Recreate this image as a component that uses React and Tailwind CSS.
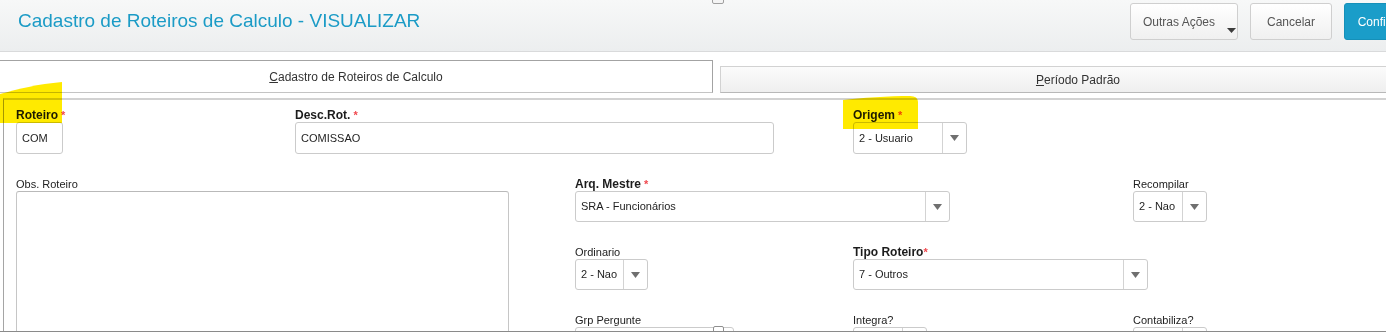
import React from "react";

function Arrow() {
  return (
    <svg width="9" height="6" viewBox="0 0 9 6">
      <path d="M0 0H9L4.5 6Z" fill="#6f6f6f" />
    </svg>
  );
}

function Label({ text, bold, req, noSpace }) {
  return (
    <div
      className={
        bold
          ? "h-[14px] leading-[14px] text-[12px] font-bold text-[#1c1c1c] whitespace-nowrap"
          : "h-[14px] leading-[14px] text-[11px] text-[#222] whitespace-nowrap"
      }
    >
      {text}
      {req && (
        <span className="text-[11px] font-bold text-[#f0484e]">{noSpace ? "*" : " *"}</span>
      )}
    </div>
  );
}

function Field({ label, bold, req, noSpace, className, children }) {
  return (
    <div className={"flex flex-col " + (className || "")}>
      <Label text={label} bold={bold} req={req} noSpace={noSpace} />
      {children}
    </div>
  );
}

function Input({ value, className }) {
  return (
    <div
      className={
        "flex items-center pl-[5px] border border-[#cbcbcb] rounded-[3px] bg-white text-[11px] text-[#1e1e1e] whitespace-nowrap " +
        className
      }
    >
      {value}
    </div>
  );
}

function Select({ value, className }) {
  return (
    <div className={"flex border border-[#cbcbcb] rounded-[3px] bg-white " + className}>
      <div className="flex-1 flex items-center pl-[5px] text-[11px] text-[#1e1e1e] whitespace-nowrap overflow-hidden">
        {value}
      </div>
      <div className="w-[24px] border-l border-[#d3d3d3] flex items-center justify-center">
        <Arrow />
      </div>
    </div>
  );
}

export default function App() {
  return (
    <div className="relative w-[1386px] h-[334px] overflow-hidden bg-white font-['Liberation_Sans',Arial,sans-serif]">
      <div className="w-[1436px]">
        {/* Header */}
        <div className="h-[52px] border-b border-[#d9dadb] bg-gradient-to-b from-[#f7f8f8] to-[#eceeef] flex items-start justify-between">
          <h1 className="pl-[18px] pt-[9px] text-[19px] leading-[24px] text-[#1b9bc6] font-normal whitespace-nowrap">
            Cadastro de Roteiros de Calculo - VISUALIZAR
          </h1>
          <div className="flex gap-[12px] pt-[3px] pr-[12px]">
            <button className="relative h-[37px] w-[108px] rounded-[3px] border border-[#cfcfcf] bg-gradient-to-b from-white to-[#f0f0f0] text-[12px] text-[#555] text-left pl-[12px]">
              Outras Ações
              <svg className="absolute right-[1px] bottom-[6px]" width="9" height="5" viewBox="0 0 9 5">
                <path d="M0 0H9L4.5 5Z" fill="#3c3c3c" />
              </svg>
            </button>
            <button className="h-[37px] w-[82px] rounded-[3px] border border-[#cfcfcf] bg-gradient-to-b from-white to-[#f0f0f0] text-[12px] text-[#555]">
              Cancelar
            </button>
            <button className="h-[37px] w-[80px] rounded-[3px] border border-[#1590b9] bg-[#1a9dc9] text-[12px] text-white">
              Confirmar
            </button>
          </div>
        </div>

        {/* Tabs */}
        <div className="mt-[8px] flex items-start">
          <div className="w-[713px] h-[33px] border-t border-r border-b border-t-[#a3a3a3] border-r-[#a3a3a3] border-b-[#c4c4c4] bg-white flex items-center justify-center text-[12px] text-[#333]">
            <span>
              <span className="underline">C</span>adastro de Roteiros de Calculo
            </span>
          </div>
          <div className="ml-[7px] mt-[6px] w-[716px] h-[27px] border border-[#d2d2d2] border-b-[#b8b8b8] bg-gradient-to-b from-[#fbfbfb] to-[#efefef] flex items-center justify-center text-[12px] text-[#333]">
            <span>
              <span className="underline">P</span>eríodo Padrão
            </span>
          </div>
        </div>

        {/* Panel */}
        <div className="mt-[5px] ml-[3px] h-[233px] border-t-2 border-l border-t-[#d2d2d2] border-l-[#a5a5a5] overflow-hidden pl-[12px] pt-[8px]">
          <div className="flex">
            <Field className="w-[279px]" label="Roteiro" bold req>
              <Input value="COM" className="w-[47px] h-[32px]" />
            </Field>
            <Field className="w-[558px]" label="Desc.Rot." bold req>
              <Input value="COMISSAO" className="w-[479px] h-[32px]" />
            </Field>
            <Field label="Origem" bold req>
              <Select value="2 - Usuario" className="w-[114px] h-[32px]" />
            </Field>
          </div>

          <div className="flex mt-[23px]">
            <Field className="w-[559px]" label="Obs. Roteiro">
              <div className="w-[493px] h-[200px] border border-[#c6c6c6] border-t-[#b9b9b9] rounded-[3px] bg-white" />
            </Field>
            <div className="flex flex-col gap-[23px]">
              <div className="flex">
                <Field className="w-[558px]" label="Arq. Mestre" bold req>
                  <Select value="SRA - Funcionários" className="w-[375px] h-[31px]" />
                </Field>
                <Field label="Recompilar">
                  <Select value="2 - Nao" className="w-[74px] h-[31px]" />
                </Field>
              </div>
              <div className="flex">
                <Field className="w-[278px]" label="Ordinario">
                  <Select value="2 - Nao" className="w-[73px] h-[31px]" />
                </Field>
                <Field label="Tipo Roteiro" bold req noSpace>
                  <Select value="7 - Outros" className="w-[295px] h-[31px]" />
                </Field>
              </div>
              <div className="flex">
                <Field className="w-[278px]" label="Grp Pergunte">
                  <div className="relative w-[159px] h-[31px] border border-[#cbcbcb] rounded-[3px] bg-white">
                    <div className="absolute left-[137px] top-[-2px] w-[11px] h-[9px] border border-[#8f8f8f] rounded-[2px] bg-white" />
                  </div>
                </Field>
                <Field className="w-[280px]" label="Integra?">
                  <Select value="" className="w-[74px] h-[31px]" />
                </Field>
                <Field label="Contabiliza?">
                  <Select value="" className="w-[74px] h-[31px]" />
                </Field>
              </div>
            </div>
          </div>
        </div>
        <div className="h-px bg-[#8a8a8a]" />
      </div>

      {/* top handle */}
      <div className="absolute left-[712px] top-[-2px] w-[12px] h-[6px] border border-[#a0a0a0] rounded-b-[2px] bg-[#f4f4f4]" />

      {/* marker highlights */}
      <svg
        className="absolute left-0 top-0 pointer-events-none mix-blend-multiply"
        width="1386"
        height="334"
        viewBox="0 0 1386 334"
      >
        <path d="M0 94 C 18 89, 38 84, 62 82 L62 123 L0 123 Z" fill="#ffea00" />
        <path d="M843 100 C 860 98, 890 96, 910 96 Q918 96 918 102 L918 129 L843 129 Z" fill="#ffea00" />
      </svg>
    </div>
  );
}
